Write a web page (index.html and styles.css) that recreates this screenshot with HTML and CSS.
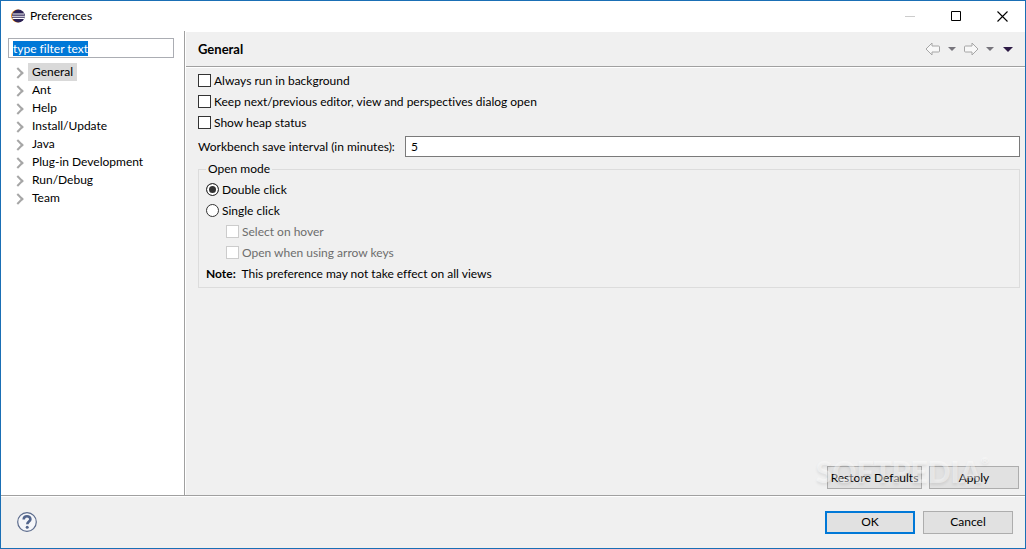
FILE: index.html
```html
<!DOCTYPE html>
<html lang="en">
<head>
    <meta charset="UTF-8">
    <title>Preferences</title>
    <link rel="stylesheet" href="styles.css">
</head>
<body>

<div class="window">
    <header class="titlebar">
        <svg class="app-icon" width="14" height="14" viewBox="0 0 14 14">
            <circle cx="6.5" cy="7" r="6.5" fill="#f7941e"/>
            <circle cx="7.4" cy="7" r="6.5" fill="#2c2255"/>
            <path d="M1.5 5h11.6M1 7.2h12.8M1.5 9.4h11.6" stroke="#fff" stroke-width="1.1"/>
        </svg>
        <h1>Preferences</h1>
        <div class="window-buttons">
            <button type="button" aria-label="Minimize"><svg width="11" height="11"><path d="M0 5.5h10" stroke="#ccc"/></svg></button>
            <button type="button" aria-label="Maximize"><svg width="11" height="11"><path d="M.5 .5h9v9h-9z" fill="none" stroke="#000"/></svg></button>
            <button type="button" aria-label="Close"><svg width="11" height="11"><path d="M.5 .5l10 10M10.500 .5l-10 10" stroke="#000" stroke-width="1.1"/></svg></button>
        </div>
    </header>

    <div class="main">
        <nav class="sidebar">
            <input type="text" id="filter" class="filter" value="type filter text" aria-label="Filter" autofocus>
            <ul class="tree">
                <li><a href="#" class="selected">General</a></li>
                <li><a href="#">Ant</a></li>
                <li><a href="#">Help</a></li>
                <li><a href="#">Install/Update</a></li>
                <li><a href="#">Java</a></li>
                <li><a href="#">Plug-in Development</a></li>
                <li><a href="#">Run/Debug</a></li>
                <li><a href="#">Team</a></li>
            </ul>
        </nav>

        <section class="page">
            <div class="page-header">
                <h2>General</h2>
                <div class="history">
                    <button type="button" aria-label="Back"><svg width="16" height="14" viewBox="0 0 16 14"><path d="M1 7L7 1V4H13.500Q14.500 4 14.500 5V9Q14.500 10 13.500 10H7V13Z" fill="#f8f8f8" stroke="#a6a6a6"/></svg></button>
                    <button type="button" aria-label="Back history"><svg width="8" height="4"><path d="M0 0h8L4 4z" fill="#77757c"/></svg></button>
                    <button type="button" aria-label="Forward"><svg width="16" height="14" viewBox="0 0 16 14"><path d="M15 7L9 1V4H2.500Q1.500 4 1.500 5V9Q1.500 10 2.500 10H9V13Z" fill="#f8f8f8" stroke="#a6a6a6"/></svg></button>
                    <button type="button" aria-label="Forward history"><svg width="8" height="4"><path d="M0 0h8L4 4z" fill="#77757c"/></svg></button>
                    <button type="button" class="menu" aria-label="Menu"><svg width="10" height="5"><path d="M0 0h10L5 5z" fill="#2d1a45"/></svg></button>
                </div>
            </div>

            <form class="settings" id="settings">
                <label class="option"><input type="checkbox">Always run in background</label>
                <label class="option"><input type="checkbox">Keep next/previous editor, view and perspectives dialog open</label>
                <label class="option"><input type="checkbox">Show heap status</label>

                <div class="interval">
                    <label for="interval">Workbench save interval (in minutes):</label>
                    <input type="text" id="interval" value="5">
                </div>

                <fieldset>
                    <legend>Open mode</legend>
                    <label class="option"><input type="radio" name="mode" checked>Double click</label>
                    <label class="option"><input type="radio" name="mode">Single click</label>
                    <label class="option sub"><input type="checkbox" disabled>Select on hover</label>
                    <label class="option sub"><input type="checkbox" disabled>Open when using arrow keys</label>
                    <p class="note"><b>Note:</b> This preference may not take effect on all views</p>
                </fieldset>
            </form>

            <div class="page-actions">
                <button type="reset" form="settings" class="btn restore">Restore Defaults</button>
                <button type="button" class="btn">Apply</button>
                <div class="watermark">SOFTPEDIA<sup>®</sup></div>
            </div>
        </section>
    </div>

    <footer class="footer">
        <button type="button" class="help" aria-label="Help">
            <svg width="20" height="20" viewBox="0 0 20 20">
                <circle cx="10" cy="10" r="9.300" fill="#f5f6f9" stroke="#5b6b8c" stroke-width="1.2"/>
                <path d="M6.700 7.600C6.700 5.200 8 4.200 10 4.200S13.400 5.400 13.400 7.200C13.400 9.600 10.300 9.500 10.300 12.300" fill="none" stroke="#52658c" stroke-width="2.600"/>
                <circle cx="10.200" cy="15.200" r="1.500" fill="#52658c"/>
            </svg>
        </button>
        <button type="button" class="btn default">OK</button>
        <button type="button" class="btn">Cancel</button>
    </footer>
</div>

<script>
    // Start with the filter text selected so typing replaces it
    const filter = document.getElementById('filter');
    filter.focus();
    filter.select();
</script>

</body>
</html>
```

FILE: styles.css
```css
* {
    box-sizing: border-box;
}
body {
    margin: 0;
    font-family: Lato, "Open Sans", sans-serif;
    font-size: 12px;
    font-variant-ligatures: none;
    line-height: 16px;
    color: #000;
}
button, input {
    font: inherit;
    font-variant-ligatures: none;
    color: inherit;
}
h1, h2, p, ul {
    margin: 0;
    padding: 0;
}
.window {
    display: flex;
    flex-direction: column;
    min-height: 100vh;
    border: 1px solid #1a6fb5;
    background: #f0f0f0;
}

/* Title bar */
.titlebar {
    display: flex;
    align-items: center;
    height: 30px;
    padding-left: 10px;
    background: #fff;
}
.titlebar h1 {
    flex: 1;
    margin-left: 5px;
    font-size: 12px;
    font-weight: normal;
}
.window-buttons {
    display: flex;
}
.window-buttons button {
    display: flex;
    align-items: center;
    justify-content: center;
    width: 46px;
    height: 28px;
    padding: 0;
    border: 0;
    background: none;
}

/* Category tree */
.main {
    display: flex;
    flex: 1;
}
.sidebar {
    width: 184px;
    padding: 7px 10px 0 7px;
    border-right: 1px solid #a0a0a0;
    background: #fff;
}
.filter {
    display: block;
    width: 100%;
    height: 20px;
    padding: 0 4px;
    border: 1px solid #abadb3;
    outline: 0;
}
.filter::selection {
    background: #0078d7;
    color: #fff;
}
.tree {
    margin-top: 5px;
    list-style: none;
}
.tree li {
    display: flex;
    align-items: center;
    height: 18px;
    padding-left: 6px;
}
.tree li::before {
    content: "";
    width: 6px;
    height: 6px;
    margin: 2px 6px 0 0;
    border: solid #a6a6a6;
    border-width: 2px 2px 0 0;
    transform: rotate(45deg);
}
.tree a {
    padding: 1px 4px;
    color: #000;
    text-decoration: none;
}
.tree .selected {
    background: #d9d9d9;
}

/* Preference page */
.page {
    display: flex;
    flex: 1;
    flex-direction: column;
    border-left: 1px solid #fff;
    border-top: 1px solid #fff;
}
.page-header {
    display: flex;
    align-items: center;
    justify-content: space-between;
    height: 35px;
    padding: 0 12px;
    border-bottom: 1px solid #a0a0a0;
    box-shadow: 0 1px #fff;
}
.page-header h2 {
    font-size: 13px;
}
.history {
    display: flex;
    align-items: center;
    gap: 7px;
}
.history button {
    display: flex;
    padding: 0;
    border: 0;
    background: none;
}
.history .menu {
    margin-left: 2px;
}
.settings {
    padding: 3px 5px 0 12px;
}
.option {
    display: flex;
    align-items: center;
    width: fit-content;
    height: 21px;
}
.option input {
    appearance: none;
    width: 13px;
    height: 13px;
    margin: 0 3px 0 0;
    border: 1px solid #333;
    background: #fff;
}
.option input:checked {
    background: #333;
}
.option input[type="radio"] {
    border-radius: 50%;
}
.option input[type="radio"]:checked {
    box-shadow: inset 0 0 0 2px #fff;
}
.option:has(:disabled) {
    color: #6d6d6d;
}
.option input:disabled {
    border-color: #ccc;
}
.interval {
    display: flex;
    align-items: center;
    gap: 10px;
    margin-top: 3px;
}
.interval input {
    flex: 1;
    height: 21px;
    padding: 0 5px;
    border: 1px solid #7a7a7a;
    outline: 0;
}
fieldset {
    margin: 4px 0 0;
    padding: 2px 7px 3px;
    border: 1px solid #dcdcdc;
}
legend {
    padding: 0 2px;
}
.sub {
    margin-left: 20px;
}
.note {
    line-height: 21px;
}
.note b {
    margin-right: 3px;
}

/* Buttons */
.btn {
    width: 90px;
    height: 23px;
    padding: 0;
    border: 1px solid #adadad;
    background: #e1e1e1;
}
.btn.default {
    border: 2px solid #0078d7;
}
.btn.restore {
    width: 95px;
}
.page-actions {
    position: relative;
    display: flex;
    justify-content: flex-end;
    gap: 7px;
    margin-top: auto;
    padding: 0 6px 6px 0;
}
.watermark {
    position: absolute;
    right: 36px;
    bottom: 8px;
    font-size: 30px;
    font-weight: 900;
    line-height: 32px;
    color: rgba(255, 255, 255, 0.45);
    text-shadow: 0 2px 3px rgba(0, 0, 0, 0.08);
    pointer-events: none;
}
.watermark sup {
    font-size: 10px;
    line-height: 10px;
    vertical-align: top;
}
.footer {
    display: flex;
    align-items: center;
    gap: 8px;
    height: 53px;
    padding: 0 12px 0 16px;
    border-top: 1px solid #a0a0a0;
    box-shadow: inset 0 1px #fff;
}
.help {
    display: flex;
    margin-right: auto;
    padding: 0;
    border: 0;
    background: none;
}
```
